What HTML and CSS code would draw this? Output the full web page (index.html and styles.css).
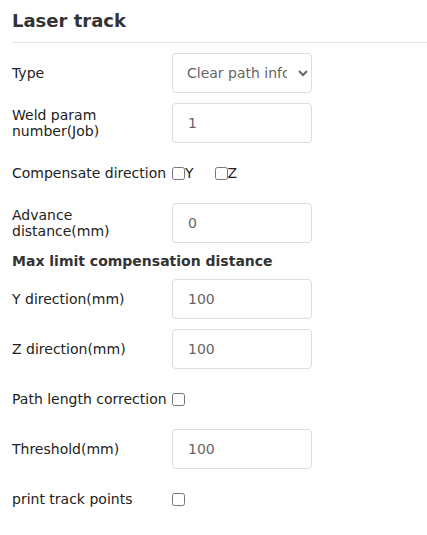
FILE: index.html
```html
<!DOCTYPE html>
<html lang="en">
<head>
    <meta charset="UTF-8">
    <meta name="viewport" content="width=device-width, initial-scale=1.0">
    <title>Laser track</title>
    <link rel="stylesheet" href="styles.css">
</head>
<body>
    <div class="panel">
        <h3 class="panel-title">Laser track</h3>
        <div class="form-row">
            <label class="form-label" for="type">Type</label>
            <select id="type" class="form-control">
                <option>Clear path info</option>
                <option>Keep path info</option>
            </select>
        </div>
        <div class="form-row">
            <label class="form-label" for="job">Weld param number(Job)</label>
            <input type="text" id="job" class="form-control" value="1">
        </div>
        <div class="form-row">
            <span class="form-label">Compensate direction</span>
            <label class="check"><input type="checkbox">Y</label>
            <label class="check"><input type="checkbox">Z</label>
        </div>
        <div class="form-row">
            <label class="form-label" for="advance">Advance distance(mm)</label>
            <input type="text" id="advance" class="form-control" value="0">
        </div>
        <h4 class="section-title">Max limit compensation distance</h4>
        <div class="form-row">
            <label class="form-label" for="ydir">Y direction(mm)</label>
            <input type="text" id="ydir" class="form-control" value="100">
        </div>
        <div class="form-row">
            <label class="form-label" for="zdir">Z direction(mm)</label>
            <input type="text" id="zdir" class="form-control" value="100">
        </div>
        <div class="form-row">
            <label class="form-label" for="pathlen">Path length correction</label>
            <input type="checkbox" id="pathlen">
        </div>
        <div class="form-row">
            <label class="form-label" for="threshold">Threshold(mm)</label>
            <input type="text" id="threshold" class="form-control" value="100">
        </div>
        <div class="form-row">
            <label class="form-label" for="points">print track points</label>
            <input type="checkbox" id="points">
        </div>
    </div>
</body>
</html>
```

FILE: styles.css
```css
body {
    margin: 0;
    font-family: "DejaVu Sans", sans-serif;
    font-size: 14px;
    color: #222;
}
.panel {
    padding: 8px 0 0 12px;
}
.panel-title {
    margin: 0 0 10px;
    font-size: 18px;
    line-height: 26px;
    color: #333;
    padding-bottom: 8px;
    border-bottom: 1px solid #e5e5e5;
}
.form-row {
    display: flex;
    align-items: center;
    min-height: 40px;
    margin-bottom: 10px;
}
.form-label {
    flex: 0 0 160px;
    width: 160px;
    line-height: 16px;
}
.form-control {
    box-sizing: border-box;
    width: 140px;
    height: 40px;
    padding: 0 15px;
    border: 1px solid #ddd;
    border-radius: 4px;
    background: #fff;
    color: #666;
    font-family: inherit;
    font-size: 14px;
}
select.form-control {
    padding: 0 8px 0 10px;
}
input[type="checkbox"] {
    width: 13px;
    height: 13px;
    margin: 0;
}
.check {
    display: flex;
    align-items: center;
    margin-right: 21px;
}
.section-title {
    margin: 0 0 10px;
    font-size: 14px;
    line-height: 16px;
    color: #333;
}
```
